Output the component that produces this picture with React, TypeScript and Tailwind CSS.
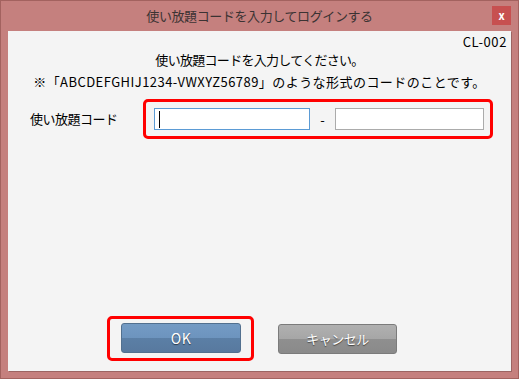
export default function App() {
  const font = { fontFamily: '"Noto Sans CJK JP", "Noto Sans", sans-serif' };
  return (
    <div
      className="w-[519px] h-[379px] bg-[#c5807e] border border-[#a3625f] flex flex-col text-[13px] text-black"
      style={font}
    >
      {/* title bar */}
      <div className="relative h-[30px] flex items-center justify-center">
        <span className="text-[13px] text-[#3b3333] tracking-[-0.4px]">使い放題コードを入力してログインする</span>
        <button className="absolute right-[7px] top-[5px] w-[19px] h-[19px] bg-[#c75050] flex items-center justify-center text-white text-[11px] font-bold leading-none">
          x
        </button>
      </div>

      {/* content */}
      <div className="mx-[7px] h-[340px] bg-[#f4f4f4] shadow-[1px_1px_0_#9c6462] flex flex-col">
        <div className="mt-[3px] pr-[4px] text-right text-[13px] leading-[16px] tracking-[0.6px]">CL-002</div>
        <div className="text-center leading-[20px] tracking-[-0.7px]">使い放題コードを入力してください。</div>
        <div className="mt-[2px] text-center leading-[20px] tracking-[0.45px]">※「ABCDEFGHIJ1234-VWXYZ56789」のような形式のコードのことです。</div>

        <div className="mt-[7px] flex items-center pl-[22px]">
          <div className="w-[113px] tracking-[-0.5px]">使い放題コード</div>
          <div className="w-[350px] h-[40px] border-[3px] border-[#ff0000] rounded-[5px] flex items-center pl-[8px]">
            <div className="w-[156px] h-[22px] bg-white border border-[#5b9bd5] flex items-center pl-[4px]">
              <div className="w-[1px] h-[17px] bg-black" />
            </div>
            <div className="w-[25px] text-center leading-none">-</div>
            <div className="w-[149px] h-[22px] bg-white border border-[#ababab]" />
          </div>
        </div>

        <div className="mt-auto mb-[10px] flex items-center pl-[99px]">
          <div className="w-[147px] h-[45px] border-[3px] border-[#ff0000] rounded-[5px] pl-[11px] pt-[4px]">
            <button className="w-[120px] h-[30px] rounded-[3px] border border-[#52708f] bg-[linear-gradient(to_bottom,#749bc4_0%,#6d94be_50%,#5b7fa6_50%,#58799f_100%)] text-white text-[14px] tracking-[0.5px] [text-shadow:0_1px_1px_rgba(0,0,0,0.55)]">
              OK
            </button>
          </div>
          <button className="ml-[24px] w-[119px] h-[30px] rounded-[3px] border border-[#7b7b7b] bg-[linear-gradient(to_bottom,#b0b0b0_0%,#a6a6a6_50%,#8f8f8f_50%,#8a8a8a_100%)] text-white text-[13px] tracking-[-0.5px] [text-shadow:0_1px_1px_rgba(0,0,0,0.55)]">
            キャンセル
          </button>
        </div>
      </div>
    </div>
  );
}
